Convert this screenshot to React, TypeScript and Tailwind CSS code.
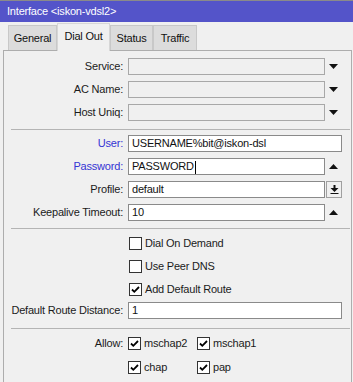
import React from 'react'

const font = { fontFamily: '"Liberation Sans", Arial, sans-serif' }

function DownArrow() {
  return (
    <svg viewBox="0 0 9 5" className="w-[9px] h-[5px]">
      <path d="M0 0h9L4.5 5z" fill="#111" />
    </svg>
  )
}

function UpArrow() {
  return (
    <svg viewBox="0 0 9 5" className="w-[9px] h-[5px]">
      <path d="M0 5h9L4.5 0z" fill="#111" />
    </svg>
  )
}

function Label({ text, blue }: { text: string; blue?: boolean }) {
  return (
    <div
      className={`w-[120px] shrink-0 flex justify-end whitespace-nowrap pr-[1px] leading-[17px] ${
        blue ? 'text-[#3434d4]' : 'text-[#1b1b1b]'
      }`}
    >
      {text}
    </div>
  )
}

function Row({
  label,
  value = '',
  blue,
  disabled,
  tail
}: {
  label: string
  value?: string
  blue?: boolean
  disabled?: boolean
  tail?: 'down' | 'up' | 'select' | null
}) {
  const wide = tail === undefined || tail === null
  return (
    <div className="flex items-center h-[17px]">
      <Label text={label} blue={blue} />
      <div
        className={`ml-[4px] h-[17px] border leading-[15px] pl-[3px] text-[#111] ${
          wide ? 'w-[214px]' : 'w-[197px]'
        } ${disabled ? 'bg-[#f0f0f0] border-[#a8a8a8]' : 'bg-white border-[#8a8a8a]'}`}
      >
        {value}
        {label === 'Password:' && <span className="inline-block w-px h-[13px] bg-black align-middle ml-px" />}
      </div>
      {tail === 'down' && (
        <div className="w-[17px] flex justify-center">
          <DownArrow />
        </div>
      )}
      {tail === 'up' && (
        <div className="w-[17px] flex justify-center">
          <UpArrow />
        </div>
      )}
      {tail === 'select' && (
        <div className="ml-px w-[16px] h-[17px] border border-[#a0a0a0] bg-[#f0f0f0] flex items-center justify-center">
          <svg viewBox="0 0 9 9" className="w-[9px] h-[9px]">
            <path d="M3.5 0h2v3h3L4.5 7 0.5 3h3z" fill="#111" />
            <path d="M0.5 8h8v1h-8z" fill="#111" />
          </svg>
        </div>
      )}
    </div>
  )
}

function Check({ label, checked, width }: { label: string; checked?: boolean; width?: string }) {
  return (
    <div className={`flex items-center h-[17px] ${width ?? ''}`}>
      <div className="w-[13px] h-[13px] border border-[#333] bg-white flex items-center justify-center">
        {checked && (
          <svg viewBox="0 0 9 9" className="w-[9px] h-[9px]">
            <path d="M1 4.5l2.3 2.3L8 2" fill="none" stroke="#000" strokeWidth="1.8" />
          </svg>
        )}
      </div>
      <span className="ml-[3px] leading-[17px] text-[#1b1b1b]">{label}</span>
    </div>
  )
}

function Sep({ mt }: { mt: string }) {
  return <div className={`${mt} ml-[7px] mr-[1px] h-px bg-[#b4b4b4]`} />
}

function Tab({ text, active, width }: { text: string; active?: boolean; width: string }) {
  if (active) {
    return (
      <div className={`${width} h-[28px] -mb-px border border-b-0 border-[#d6d6d6] bg-[#f0f0f0] text-center leading-[24px] text-[#111] z-10 relative`}>
        {text}
      </div>
    )
  }
  return (
    <div className={`${width} h-[25px] border border-[#c8c8c8] border-b-0 bg-[#dcdcdc] text-center leading-[25px] text-[#111]`}>
      {text}
    </div>
  )
}

export default function App(): React.ReactElement {
  return (
    <div
      className="w-[353px] h-[382px] bg-[#f0f0f0] overflow-hidden flex flex-col text-[11px] tracking-[-0.2px]"
      style={font}
    >
      {/* Title */}
      <div className="h-[22px] shrink-0 bg-[#5454c9] border-t border-[#8a8a8a] text-white pl-[7px] leading-[21px]">
        Interface &lt;iskon-vdsl2&gt;
      </div>

      {/* Tabs */}
      <div className="h-[28px] shrink-0 flex items-end pl-[8px]">
        <Tab text="General" width="w-[49px]" />
        <Tab text="Dial Out" active width="w-[53px]" />
        <Tab text="Status" width="w-[43px]" />
        <Tab text="Traffic" width="w-[44px]" />
      </div>

      {/* Panel */}
      <div className="flex-1 ml-[3px] mr-[1px] border border-b-0 border-[#adadad] bg-[#f0f0f0] flex flex-col">
        <div className="mt-[7px]">
          <Row label="Service:" disabled tail="down" />
        </div>
        <div className="mt-[6px]">
          <Row label="AC Name:" disabled tail="down" />
        </div>
        <div className="mt-[6px]">
          <Row label="Host Uniq:" disabled tail="down" />
        </div>

        <Sep mt="mt-[8px]" />

        <div className="mt-[5px]">
          <Row label="User:" value="USERNAME%bit@iskon-dsl" blue />
        </div>
        <div className="mt-[6px]">
          <Row label="Password:" value="PASSWORD" blue tail="up" />
        </div>
        <div className="mt-[6px]">
          <Row label="Profile:" value="default" tail="select" />
        </div>
        <div className="mt-[6px]">
          <Row label="Keepalive Timeout:" value="10" tail="up" />
        </div>

        <Sep mt="mt-[7px]" />

        <div className="mt-[6px] pl-[125px] flex flex-col gap-[6px]">
          <Check label="Dial On Demand" />
          <Check label="Use Peer DNS" />
          <Check label="Add Default Route" checked />
        </div>

        <div className="mt-[4px]">
          <Row label="Default Route Distance:" value="1" />
        </div>

        <Sep mt="mt-[9px]" />

        <div className="mt-[6px] flex items-start">
          <Label text="Allow:" />
          <div className="ml-[4px] flex flex-col gap-[7px]">
            <div className="flex">
              <Check label="mschap2" checked width="w-[69px]" />
              <Check label="mschap1" checked />
            </div>
            <div className="flex">
              <Check label="chap" checked width="w-[69px]" />
              <Check label="pap" checked />
            </div>
          </div>
        </div>
      </div>
    </div>
  )
}
